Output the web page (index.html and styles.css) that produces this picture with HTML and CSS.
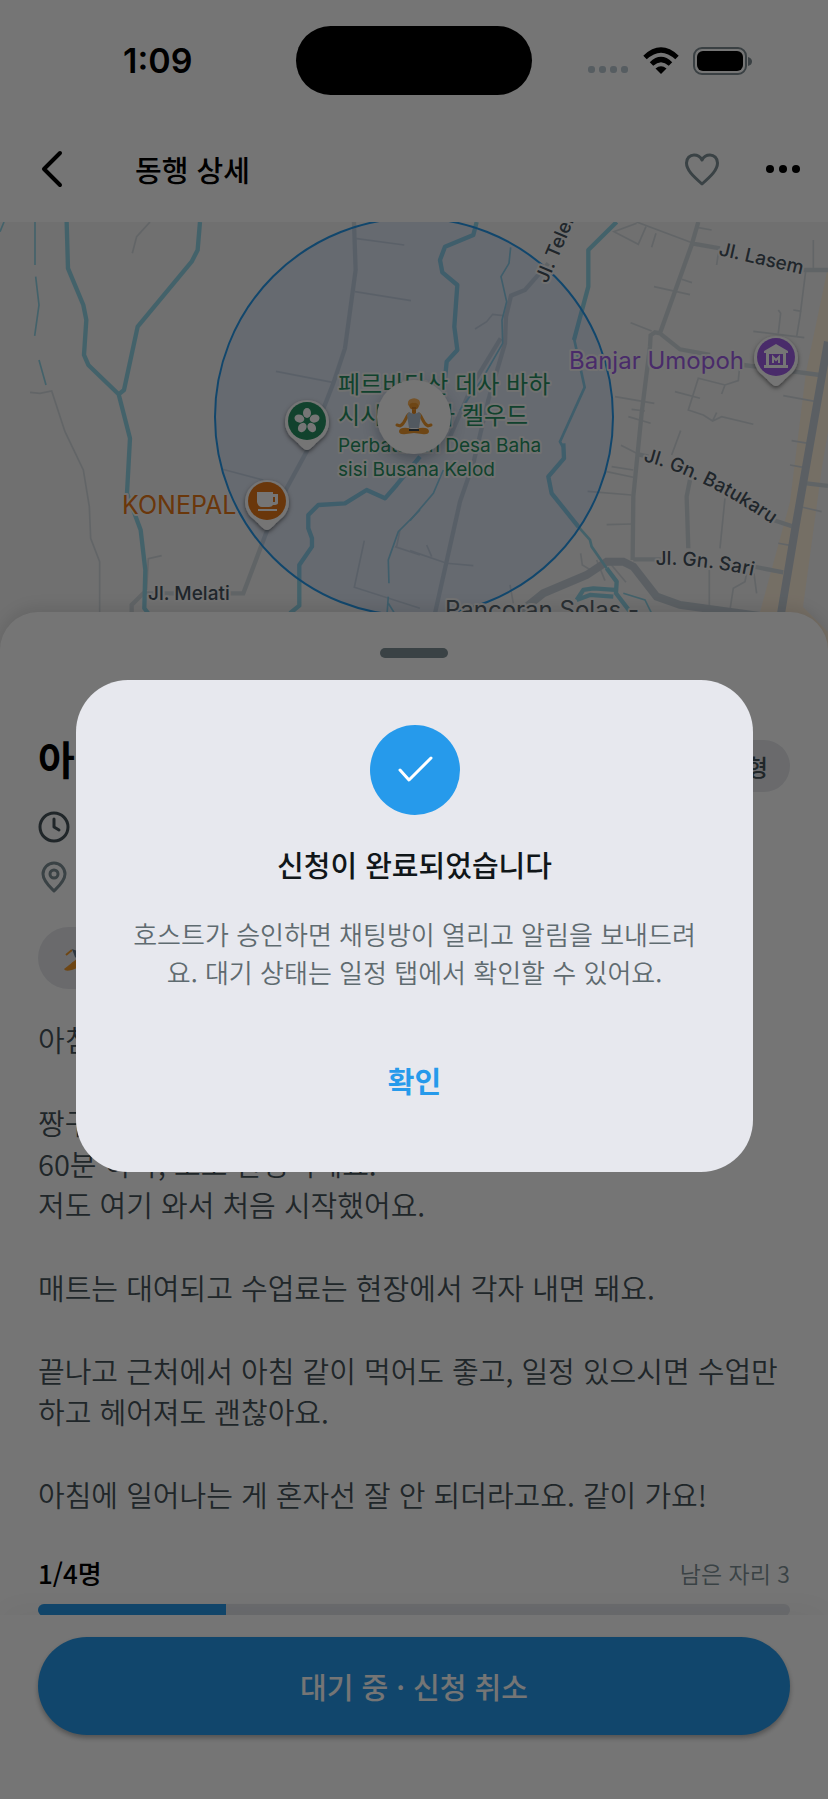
FILE: index.html
```html
<!DOCTYPE html>
<html lang="ko">
<head>
    <meta charset="utf-8">
    <meta name="viewport" content="width=device-width, initial-scale=1.0">
    <title>동행 상세</title>
    <link rel="stylesheet" href="styles.css">
</head>
<body>
    <div class="screen">
        <div class="status-bar">
            <span class="status-time">1:09</span>
            <span class="status-island"></span>
            <div class="status-icons">
                <svg width="42" height="28" viewBox="0 0 42 28" fill="#bccad3" aria-hidden="true">
                    <rect x="1" y="19" width="7" height="7" rx="3"/>
                    <rect x="12" y="19" width="7" height="7" rx="3"/>
                    <rect x="23" y="19" width="7" height="7" rx="3"/>
                    <rect x="34" y="19" width="7" height="7" rx="3"/>
                </svg>
                <svg width="36" height="28" viewBox="0 0 36 28" aria-hidden="true">
                    <g fill="none" stroke="#000" stroke-width="5">
                        <path d="M2 10.500Q18 -4.500 34 10.500"/>
                        <path d="M8.500 17Q18 8 27.500 17"/>
                    </g>
                    <path d="M12.500 21.500Q18 17 23.500 21.500L18 27Z"/>
                </svg>
                <svg width="60" height="28" viewBox="0 0 60 28" aria-hidden="true">
                    <rect x="1" y="1" width="52" height="26" rx="8" fill="none" stroke="#7e8c92" stroke-width="2"/>
                    <rect x="4" y="4" width="46" height="20" rx="6"/>
                    <path d="M55 10Q59 11 59 14.500Q59 18 55 19Z" fill="#7e8c92"/>
                </svg>
            </div>
        </div>

        <header class="header">
            <button class="icon-button" type="button" aria-label="뒤로">
                <svg width="36" height="40" viewBox="0 0 36 40" fill="none" stroke="#000" stroke-width="4" stroke-linecap="round" stroke-linejoin="round"><path d="M25 4L9 20l16 16"/></svg>
            </button>
            <h1 class="header-title">동행 상세</h1>
            <button class="icon-button" type="button" aria-label="찜하기">
                <svg width="38" height="38" viewBox="0 0 38 38" fill="none" stroke="#7e9096" stroke-width="3" stroke-linejoin="round"><path d="M19 34C10 26 3.500 20 3.500 13C3.500 8 7 5 11 5C15 5 17.500 7 19 10C20.500 7 23 5 27 5C31 5 34.500 8 34.500 13C34.500 20 28 26 19 34Z"/></svg>
            </button>
            <button class="icon-button" type="button" aria-label="더보기">
                <svg width="36" height="38" viewBox="0 0 36 38"><circle cx="5" cy="19" r="4"/><circle cx="18" cy="19" r="4"/><circle cx="31" cy="19" r="4"/></svg>
            </button>
        </header>

        <div class="map">
            <svg class="map-canvas" viewBox="0 0 828 428" preserveAspectRatio="xMidYMin slice" role="img" aria-label="지도">
                <defs>
                    <filter id="pin-shadow" x="-50%" y="-50%" width="200%" height="200%"><feDropShadow dx="0" dy="2" stdDeviation="2" flood-opacity="0.5"/></filter>
                    <filter id="spot-shadow" x="-50%" y="-50%" width="200%" height="200%"><feDropShadow dx="0" dy="5" stdDeviation="7" flood-color="#34495e" flood-opacity="0.4"/></filter>
                    <path id="batukaru" d="M643 239Q707 255 790 315"/>
                    <path id="sari" d="M656 343Q705 341 780 360"/>
                    <path id="pin" d="M0 29C-4 29 -9 21 -16 16A22 22 0 1 1 16 16C9 21 4 29 0 29Z"/>
                </defs>

                <!-- main street strip -->
                <path class="zone" d="M828 45L806 150L790 280L760 390V428H828V410L803 385L822 245L828 210Z"/>

                <!-- west side -->
                <g transform="translate(0 -12) scale(.3333)" fill="none">
                    <g class="lane">
                        <path d="M450 36L410 80L397 130M90 547L120 550L155 543L195 665L250 780L268 890L272 985L299 1055V1230"/>
                        <path d="M1065 85L1213 105M1065 245L1233 272M828 484L998 517M665 777L790 810M1093 992L1063 1132L1260 1195M1185 1010L1260 1035M1190 1010L1200 960M485 1037L445 1046L440 1140"/>
                    </g>
                    <path class="road" d="M1062 36L1067 180L1035 415L1000 520L920 725L860 835L800 965L730 1150H430L395 1185V1230"/>
                    <g class="river">
                        <path d="M200 36L204 175L250 285L259 330L252 435L265 465L356 553L390 685L381 850L422 960L436 1080L433 1195L460 1230"/>
                        <path d="M600 36L593 120L575 155L413 350L372 540L356 553M870 1210L898 1187V1065L936 1010V985L925 955V915L955 885L1035 880L1100 840L1155 865L1190 825L1260 740"/>
                    </g>
                    <path class="stream" d="M105 36V165M107 200L117 285L104 378M117 450L138 525M12 36L0 65M1260 900L1195 965L1165 1050L1167 1120M1165 1160L1160 1230M1165 1180L1190 1220"/>
                </g>

                <!-- east side -->
                <g transform="translate(410 -12) scale(.3333)" fill="none">
                    <g class="lane">
                        <path d="M680 36L850 100M680 40L612 65L685 103L708 50M738 70L725 112M865 53L905 60M815 208L846 218M732 230L840 254M662 338L725 363M1030 364L1183 383M1105 300L1112 310L1105 370M1187 185L1170 320L1160 380M1150 300L1175 304M920 165L925 130"/>
                        <path d="M0 1022L110 1060L190 1067M50 1005L65 1040M195 357L230 335L248 313L280 317M615 560L733 580M795 545L870 565M990 460L985 512L945 525L865 505L835 600L880 615L908 633L935 620L1030 643M908 633L920 608M945 525L935 552M665 598L705 603M655 620L722 640M812 662L785 735M633 706L680 730M605 770L670 780M590 785L670 802M533 844L665 855M590 944L665 942"/>
                        <path d="M945 865L930 1015M898 1080V1200M1010 1090L1005 1115L970 1135L960 1200M1032 1090L1040 1150M1120 557L1215 574M1145 692L1195 700M1140 765L1180 772M1178 892L1235 905M1105 1000L1145 1007M1210 90V180M300 1125L310 1180M512 1030L517 1065L550 1085M560 1050L585 1112M600 1060L648 1117"/>
                    </g>
                    <g class="road">
                        <path d="M865 36L845 105L750 370L735 367L722 376L720 410L695 610L670 860L668 1050M845 100L930 115M1180 180H1254M750 370L810 418L900 435M1000 465L1230 495M685 733L715 740M1090 930L1150 950M670 1048H760M1020 1068L1120 1087M1190 820L1254 828M840 810L830 860L835 1015"/>
                        <path d="M415 160L345 240L303 257L288 320L285 400L235 570L190 760L150 875L75 1210M272 385L190 520L120 680"/>
                    </g>
                    <g class="avenue">
                        <path d="M300 1230L400 1150L530 1095L590 1055H640L670 1070L740 1160L810 1185L1100 1225"/>
                        <path d="M1254 395L1190 760L1155 960L1110 1230"/>
                    </g>
                    <g class="river">
                        <path d="M200 36L190 75L105 110L90 150L97 187L142 225L133 350L142 420L110 455L100 560M620 36L535 120V230L492 390"/>
                        <path d="M460 700L462 745L415 800L425 850L505 950"/>
                        <path d="M590 1075L620 1115L618 1150L660 1205M500 1170L520 1140L550 1135L615 1140M500 1170L540 1155L610 1160"/>
                    </g>
                    <path class="stream stream-wide" d="M492 385L524 532L450 695L458 710M500 945L540 990L545 1010L590 1075"/>
                    <path class="stream" d="M302 112L297 160L273 200L290 275L276 330L278 400L215 510L150 600M100 780L70 850L0 932M640 1150L705 1170L725 1210"/>
                </g>

                <circle class="area" cx="414" cy="195" r="199"/>

                <g class="label label-road">
                    <text x="148" y="378">Jl. Melati</text>
                    <text x="718" y="33" transform="rotate(13 718 33)">Jl. Lasem</text>
                    <text x="547" y="62" transform="rotate(-67 547 62)">Jl. Teler...</text>
                    <text><textPath href="#batukaru">Jl. Gn. Batukaru</textPath></text>
                    <text><textPath href="#sari">Jl. Gn. Sari</textPath></text>
                </g>
                <text class="label label-town" x="445" y="396">Pancoran Solas -</text>
                <text class="label label-food" x="122" y="292">KONEPAL</text>
                <text class="label label-place" x="569" y="147">Banjar Umopoh</text>
                <g class="label label-park">
                    <text class="label-ko" x="338" y="171">페르바타산 데사 바하</text>
                    <text class="label-ko" x="338" y="202">시시 부사나 켈우드</text>
                    <text x="338" y="230">Perbatasan Desa Baha</text>
                    <text x="338" y="254">sisi Busana Kelod</text>
                </g>

                <!-- park pin -->
                <g transform="translate(307 199)">
                    <use href="#pin" fill="#fff" filter="url(#pin-shadow)"/>
                    <circle r="19" fill="#259162"/>
                    <g fill="#fff">
                        <ellipse cy="-8" rx="4" ry="5"/>
                        <ellipse cy="-8" rx="4" ry="5" transform="rotate(72)"/>
                        <ellipse cy="-8" rx="4" ry="5" transform="rotate(144)"/>
                        <ellipse cy="-8" rx="4" ry="5" transform="rotate(216)"/>
                        <ellipse cy="-8" rx="4" ry="5" transform="rotate(288)"/>
                    </g>
                </g>
                <!-- cafe pin -->
                <g transform="translate(267 279)">
                    <use href="#pin" fill="#fff" filter="url(#pin-shadow)"/>
                    <circle r="19" fill="#e87818"/>
                    <path d="M-10 -9H6V-7H11V2Q11 4 6 4Q5 6 2 6H-5Q-9 6 -10 1ZM6 -4V1H8V-4Z" fill="#fff" fill-rule="evenodd"/>
                    <rect x="-9" y="8" width="19" height="2" fill="#fff"/>
                </g>
                <!-- museum pin -->
                <g transform="translate(776 135)">
                    <use href="#pin" fill="#fff" filter="url(#pin-shadow)"/>
                    <circle r="19" fill="#a05fe6"/>
                    <path d="M0 -13L12 -6V-4H10V8H12V11H-12V8H-10V-4H-12V-6ZM-7 -3V8H7V-3Z" fill="#fff" fill-rule="evenodd"/>
                    <path d="M-3 6V0L0 3L3 0V6" fill="none" stroke="#fff" stroke-width="2"/>
                </g>
                <!-- meeting spot -->
                <g transform="translate(414 195)">
                    <circle r="37" fill="#fff" filter="url(#spot-shadow)"/>
                    <path d="M-5 -3C-9 0 -8 6 -14 9L-17 8M5 -3C9 0 8 6 14 9L17 8" fill="none" stroke="#f09a2e" stroke-width="3" stroke-linecap="round"/>
                    <path d="M-15 14Q-14 10 -6 11L0 13L6 11Q14 10 15 14Q15 18 8 17L0 16L-8 17Q-15 18 -15 14Z" fill="#f09a2e"/>
                    <path d="M-5 -5Q0 -2 5 -5L7 -2L5 11H-5L-7 -2Z" fill="#b4c3d2"/>
                    <path d="M-2 -8H2V-4Q0 -2 -2 -4Z" fill="#e58920"/>
                    <circle cy="-12" r="5" fill="#f09a2e"/>
                    <path d="M-6 -11Q-7 -17 -3 -18Q1 -20 5 -17Q7 -14 5 -11Q3 -15 0 -14Q-3 -15 -6 -11Z" fill="#ffb65c"/>
                    <path d="M-2 -9H2" stroke="#b4601a" stroke-width="1"/>
                    <path d="M-5 13H5" stroke="#3c4650" stroke-width="2"/>
                </g>
            </svg>
        </div>

        <main class="sheet">
            <div class="sheet-handle"></div>
            <div class="sheet-head">
                <h2 class="sheet-title">아침 요가</h2>
                <span class="badge">모집형</span>
            </div>
            <svg class="meta-icon" viewBox="0 0 32 32" fill="none" stroke="#46535a" stroke-width="3" stroke-linecap="round" stroke-linejoin="round" aria-hidden="true"><circle cx="16" cy="16" r="14"/><path d="M16 8V16L21 19"/></svg>
            <svg class="meta-icon" viewBox="0 0 32 32" fill="none" stroke="#7e9096" stroke-width="3" stroke-linejoin="round" aria-hidden="true"><path d="M16 30C12 26 5 20 5 13A11 11 0 0 1 27 13C27 20 20 26 16 30Z"/><circle cx="16" cy="13" r="4"/></svg>
            <div class="tag">
                <svg width="26" height="26" viewBox="0 0 26 26" aria-hidden="true">
                    <path d="M0 22L9 15L25 10Q20 19 8 23Q1 25 0 22Z" fill="#f09a2e"/>
                    <path d="M2 8L8 3M13 13L8 17" fill="none" stroke="#f09a2e" stroke-width="2"/>
                    <path d="M8 2L16 5L16 14L11 10Z" fill="#64788c"/>
                </svg>
            </div>
            <div class="description">
                <p>아침 요가 같이 가실 분</p>
                <p>짱구 요가원이에요.<br>60분 하타, 초보 환영이에요.<br>저도 여기 와서 처음 시작했어요.</p>
                <p>매트는 대여되고 수업료는 현장에서 각자 내면 돼요.</p>
                <p>끝나고 근처에서 아침 같이 먹어도 좋고, 일정 있으시면 수업만<br>하고 헤어져도 괜찮아요.</p>
                <p>아침에 일어나는 게 혼자선 잘 안 되더라고요. 같이 가요!</p>
            </div>
            <div class="seats">
                <label class="seats-count" for="seats">1/4명</label>
                <span class="seats-left">남은 자리 3</span>
            </div>
            <progress class="seats-progress" id="seats" value="1" max="4"></progress>
        </main>

        <footer class="footer">
            <button class="cancel-button" type="button">대기 중 · 신청 취소</button>
        </footer>
    </div>

    <div class="overlay">
        <dialog class="dialog" open aria-labelledby="dialog-title">
            <span class="dialog-icon">
                <svg width="40" height="40" viewBox="0 0 40 40" fill="none" stroke="#fff" stroke-width="3" stroke-linecap="round" stroke-linejoin="round" aria-hidden="true"><path d="M5 20L14 30L36 8"/></svg>
            </span>
            <h2 class="dialog-title" id="dialog-title">신청이 완료되었습니다</h2>
            <p class="dialog-text">호스트가 승인하면 채팅방이 열리고 알림을 보내드려<br>요. 대기 상태는 일정 탭에서 확인할 수 있어요.</p>
            <button class="dialog-button" type="button">확인</button>
        </dialog>
    </div>
</body>
</html>
```
FILE: styles.css
```css
:root {
    --primary: #269aeb;
    --text: #000;
    --text-body: #46535a;
    --text-muted: #7e9096;
    --surface: #fff;
    --soft: #e6e8ec;
    --gutter: 38px;
}

* {
    margin: 0;
    padding: 0;
    box-sizing: border-box;
}

body {
    font-family: 'Noto Sans CJK KR', 'Noto Sans', sans-serif;
    color: var(--text);
    background: var(--surface);
}

button {
    border: 0;
    background: none;
    font-family: inherit;
    cursor: pointer;
}

svg {
    display: block;
}

.screen {
    display: flex;
    flex-direction: column;
    height: 100vh;
    overflow: hidden;
}

/* Status bar */
.status-bar {
    flex: none;
    display: grid;
    grid-template-columns: 1fr auto 1fr;
    align-items: center;
    height: 121px;
}

.status-time {
    padding-left: 123px;
    font-family: Inter, sans-serif;
    font-size: 34px;
    font-weight: 600;
}

.status-island {
    width: 236px;
    height: 69px;
    border-radius: 35px;
    background: #000;
}

.status-icons {
    display: flex;
    justify-content: flex-end;
    gap: 14px;
    padding-right: 75px;
}

/* Header */
.header {
    flex: none;
    display: flex;
    align-items: center;
    height: 101px;
    padding: 0 27px 6px 35px;
}

.header-title {
    flex: 1;
    padding-left: 64px;
    font-size: 29px;
    font-weight: 500;
}

.icon-button + .icon-button {
    margin-left: 44px;
}

/* Map */
.map {
    flex: none;
    height: 428px;
    overflow: hidden;
    background: #f3f3f3;
}

.map-canvas {
    width: 100%;
    height: 100%;
}

.zone {
    fill: #fff1dd;
}

.lane {
    stroke: #d6dce0;
    stroke-width: 5;
}

.road {
    stroke: #d2dadf;
    stroke-width: 13;
}

.avenue {
    stroke: #c6d0d8;
    stroke-width: 24;
}

.river {
    stroke: #93d5e8;
    stroke-width: 13;
    stroke-linejoin: round;
}

.stream {
    stroke: #93d5e8;
    stroke-width: 5;
}

.stream-wide {
    stroke-width: 8;
}

.area {
    fill: rgba(70, 140, 250, 0.12);
    stroke: var(--primary);
    stroke-width: 2;
}

.label {
    font-family: Inter, 'Noto Sans CJK KR', sans-serif;
    font-size: 19px;
    stroke: #f6f6f6;
    stroke-width: 4px;
    stroke-linejoin: round;
    paint-order: stroke;
}

.label-road {
    fill: #46535e;
    font-weight: 500;
}

.label-town {
    fill: #5c6870;
    font-size: 24px;
}

.label-food {
    fill: #e87818;
    font-size: 25px;
}

.label-place {
    fill: #a05fe6;
    font-size: 24px;
}

.label-park {
    fill: #259162;
}

.label-ko {
    font-size: 24px;
}

/* Bottom sheet */
.sheet {
    flex: 1;
    min-height: 0;
    position: relative;
    margin-top: -38px;
    padding: 36px var(--gutter) 0;
    border-radius: 38px 38px 0 0;
    background: var(--surface);
    box-shadow: 0 -4px 16px rgba(0, 0, 0, 0.1);
    overflow: hidden;
}

.sheet-handle {
    width: 68px;
    height: 10px;
    margin: 0 auto 82px;
    border-radius: 5px;
    background: var(--text-muted);
}

.sheet-head {
    display: flex;
    justify-content: space-between;
    align-items: flex-start;
    margin-bottom: 19px;
}

.sheet-title {
    font-size: 40px;
    font-weight: 700;
    line-height: 36px;
}

.badge {
    padding: 0 22px;
    border-radius: 26px;
    background: var(--soft);
    color: var(--text-body);
    font-size: 23px;
    font-weight: 500;
    line-height: 52px;
}

.meta-icon {
    width: 32px;
    height: 32px;
    margin-bottom: 18px;
}

.tag {
    display: flex;
    align-items: center;
    width: 160px;
    height: 62px;
    margin: 34px 0 30px;
    padding: 4px 26px 0;
    border-radius: 31px;
    background: var(--soft);
}

.description {
    display: grid;
    gap: 42px;
    color: var(--text-body);
    font-size: 29px;
    font-weight: 350;
    line-height: 41px;
    white-space: nowrap;
}

.seats {
    display: flex;
    justify-content: space-between;
    align-items: center;
    margin: 42px 0 15px;
    line-height: 32px;
}

.seats-count {
    font-size: 26px;
    font-weight: 500;
}

.seats-left {
    color: var(--text-muted);
    font-size: 23px;
    font-weight: 350;
}

.seats-progress {
    display: block;
    width: 100%;
    height: 12px;
    appearance: none;
    border: 0;
    border-radius: 6px;
    overflow: hidden;
}

.seats-progress::-webkit-progress-bar {
    background: #e6e8ee;
}

.seats-progress::-webkit-progress-value {
    background: var(--primary);
}

/* Footer */
.footer {
    flex: none;
    position: relative;
    padding: 22px var(--gutter) 64px;
    background: var(--surface);
    box-shadow: 0 -8px 32px rgba(0, 0, 0, 0.04);
}

.cancel-button {
    width: 100%;
    height: 98px;
    border-radius: 49px;
    background: var(--primary);
    box-shadow: 0 3px 5px rgba(0, 0, 0, 0.3);
    color: #fff;
    font-size: 29px;
    font-weight: 500;
}

/* Dialog */
.overlay {
    position: fixed;
    inset: 0;
    display: flex;
    align-items: center;
    padding: 52px 75px 0 76px;
    background: rgba(0, 0, 0, 0.54);
}

.dialog {
    position: static;
    display: flex;
    flex-direction: column;
    align-items: center;
    width: 100%;
    padding: 45px 40px;
    border: 0;
    border-radius: 52px;
    background: #e7e8ee;
    text-align: center;
}

.dialog-icon {
    display: grid;
    place-items: center;
    width: 90px;
    height: 90px;
    border-radius: 50%;
    background: var(--primary);
}

.dialog-title {
    margin: 28px 0 30px;
    color: #101619;
    font-size: 29px;
    font-weight: 500;
    line-height: 42px;
}

.dialog-text {
    color: #5f6b70;
    font-size: 26px;
    font-weight: 350;
    line-height: 38px;
    white-space: nowrap;
}

.dialog-button {
    margin-top: 44px;
    margin-bottom: 2px;
    padding: 0 40px;
    color: var(--primary);
    font-size: 29px;
    font-weight: 700;
    line-height: 90px;
}
```
